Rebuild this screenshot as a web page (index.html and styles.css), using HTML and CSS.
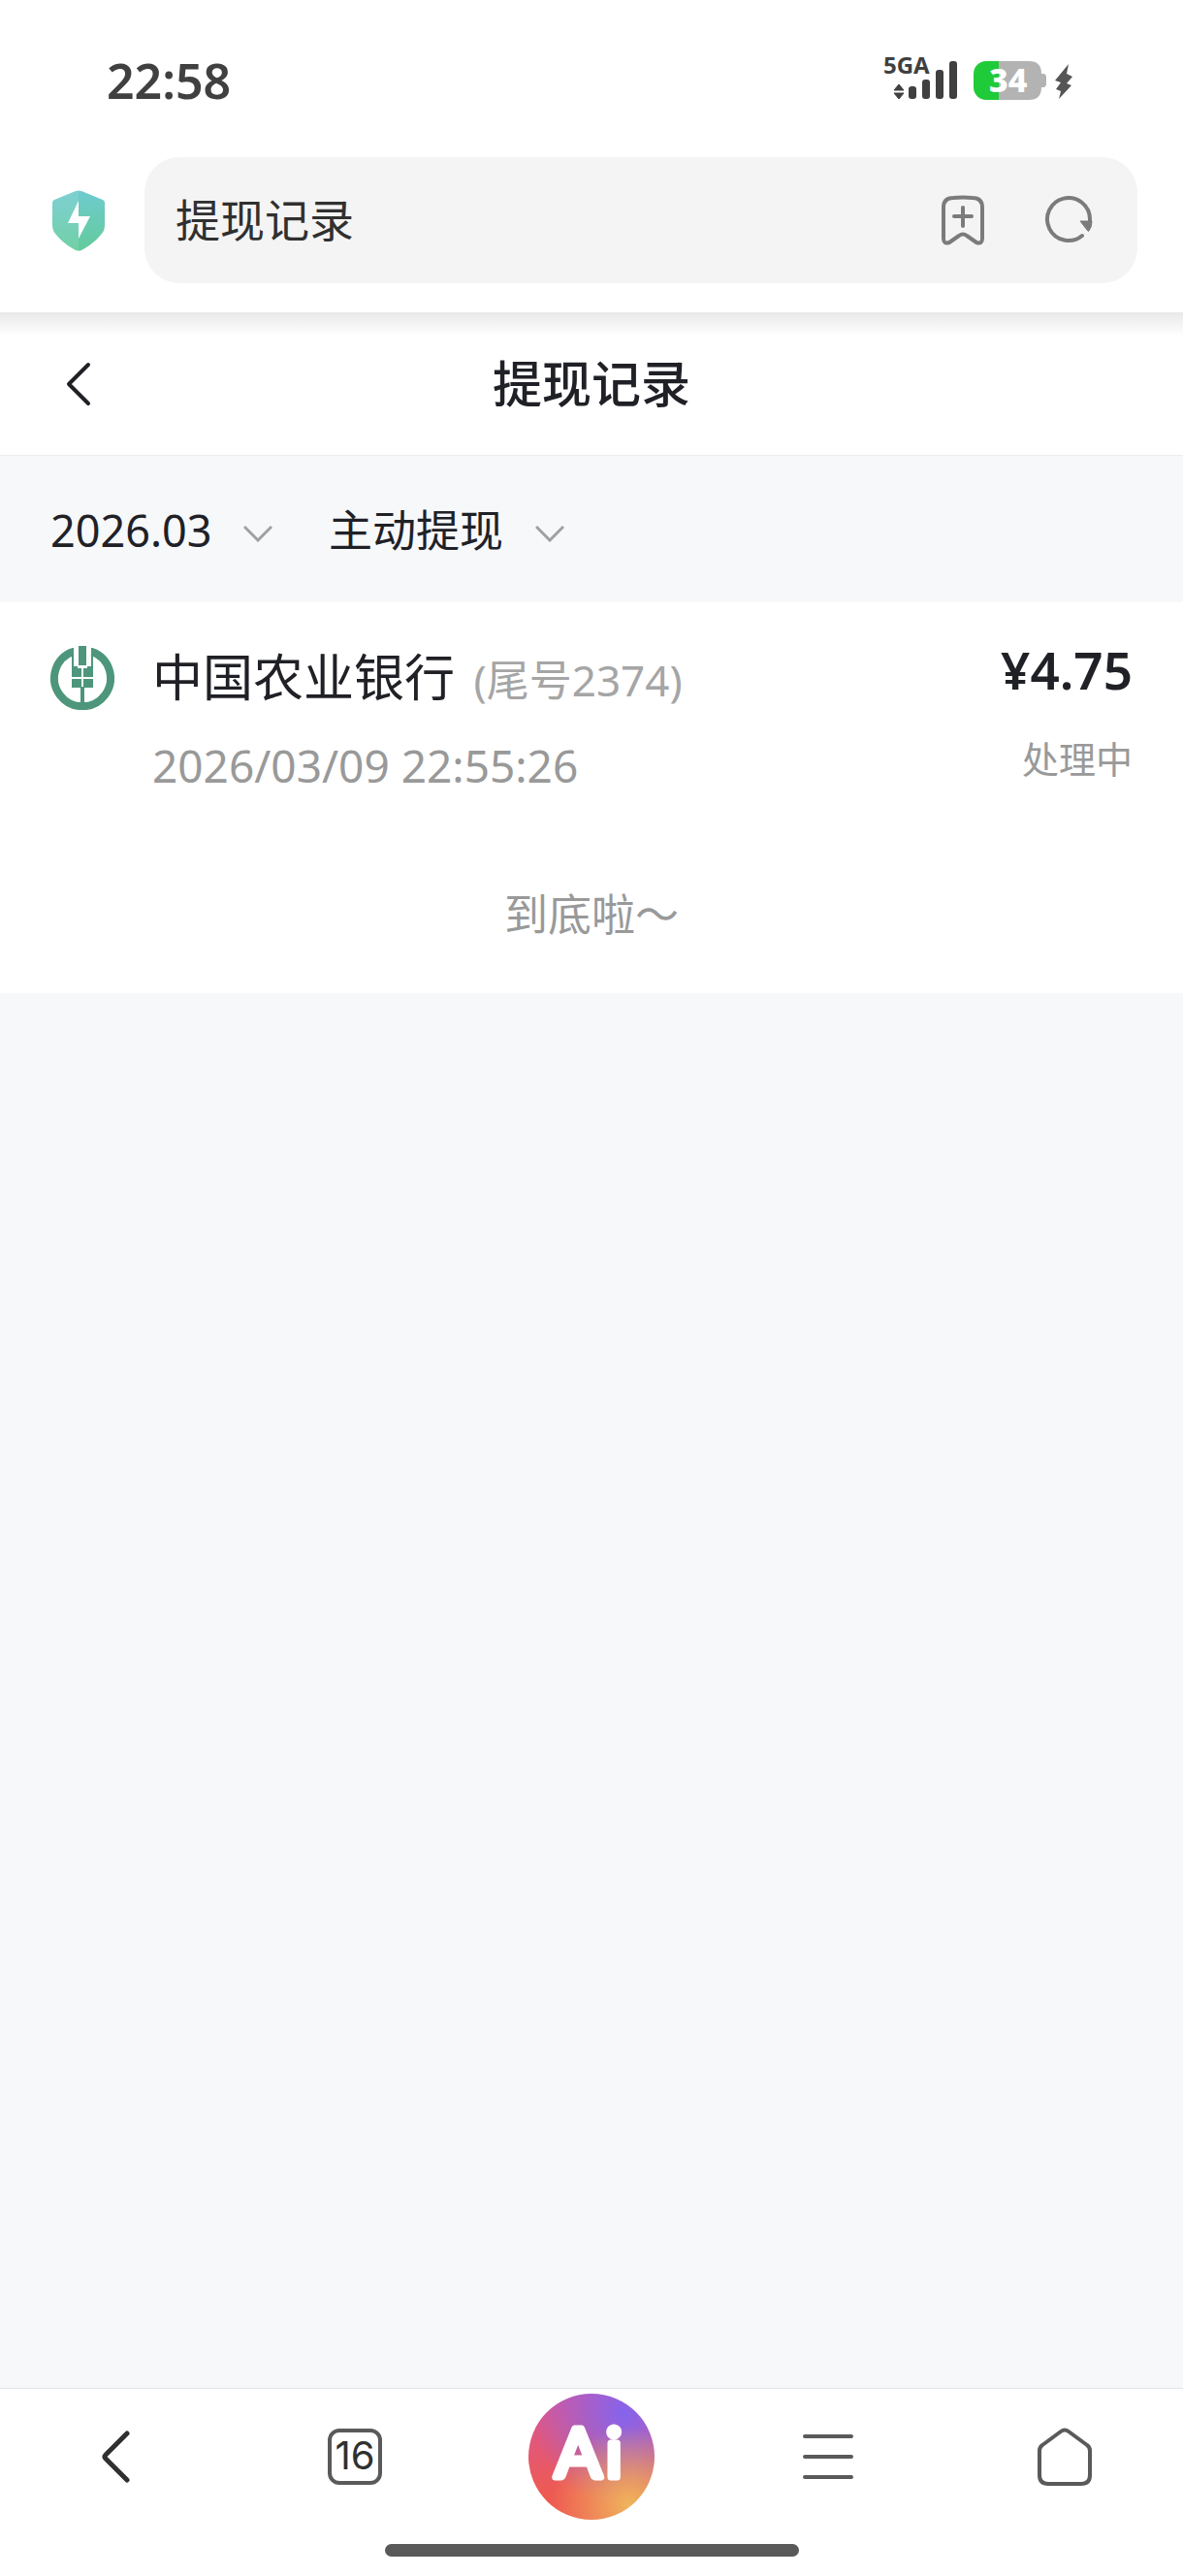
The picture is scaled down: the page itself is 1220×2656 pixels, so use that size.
FILE: index.html
```html
<!DOCTYPE html>
<html lang="zh-CN">
<head>
    <meta charset="UTF-8">
    <meta name="viewport" content="width=device-width, initial-scale=1.0">
    <title>提现记录</title>
    <link rel="stylesheet" href="styles.css">
</head>
<body>
    <header class="browser">
        <div class="status-bar">
            <time class="clock">22:58</time>
            <div class="status-icons">
                <svg class="signal" width="78" height="54" viewBox="0 -6 78 54">
                    <text x="0" y="21">5GA</text>
                    <path d="M11 38 L16 32 L21 38 Z M11 41 L16 47 L21 41 Z" stroke="#404040" stroke-linejoin="round"/>
                    <rect x="26" y="34" width="8" height="13" rx="3"/>
                    <rect x="40" y="27" width="8" height="20" rx="3"/>
                    <rect x="54" y="17" width="8" height="30" rx="3"/>
                    <rect x="68" y="8" width="8" height="39" rx="3"/>
                </svg>
                <svg class="battery" width="76" height="48" viewBox="0 -8 76 48">
                    <rect class="battery-level" x="0" y="0" width="50" height="40" rx="13"/>
                    <path class="battery-rest" d="M26 0 H57 Q70 0 70 13 H72 Q75 13 75 17 V23 Q75 27 72 27 H70 Q70 40 57 40 H26 Z"/>
                    <text x="16" y="32">34</text>
                </svg>
                <svg class="bolt" width="18" height="38" viewBox="0 0 18 38">
                    <path d="M14 1 L0 18 L6 20 L1 27 L6 29 L4 37 L17 23 L12 21 L18 14 L12 11 Z"/>
                </svg>
            </div>
        </div>
        <form class="address-row">
            <svg class="shield" width="54" height="63" viewBox="0 0 54 63">
                <defs>
                    <linearGradient id="shieldFill" x1="0" y1="0" x2="0" y2="1">
                        <stop offset="0" stop-color="#6fcbcf"/>
                        <stop offset="1" stop-color="#62cb9b"/>
                    </linearGradient>
                </defs>
                <path fill="url(#shieldFill)" d="M24 1 Q27 0 30 1 L52 10 Q54 11 54 13 V36 Q54 42 50 46 Q43 55 30 62 Q27 63 24 62 Q11 55 4 46 Q0 42 0 36 V13 Q0 11 2 10 Z"/>
                <path fill="#fff" opacity="0.1" d="M27 0 Q24 0 22 2 L2 10 Q0 11 0 13 V36 Q0 42 4 46 Q11 55 24 62 Q27 63 27 63 Z"/>
                <path fill="#fff" d="M27 11 L16 34 H27 V50 L39 27 H27 Z"/>
            </svg>
            <div class="address-box">
                <input class="address" type="text" value="提现记录" aria-label="搜索或输入网址">
                <button class="icon-button" type="button" aria-label="添加书签">
                    <svg width="46" height="52" viewBox="0 0 46 52" fill="none" stroke="#7b7b7b" stroke-width="4" stroke-linecap="round" stroke-linejoin="round">
                        <path d="M3 45 V13 Q3 3 13 3 Q23 2 33 3 Q43 3 43 13 V45 Q43 51 37 49 L27 42 Q23 39 19 42 L9 49 Q3 51 3 45 Z"/>
                        <path d="M23 13 V32 M14 22 H32"/>
                    </svg>
                </button>
                <button class="icon-button" type="button" aria-label="刷新">
                    <svg width="50" height="50" viewBox="0 0 50 50">
                        <path fill="none" stroke="#7b7b7b" stroke-width="4" stroke-linecap="round" d="M39 41 A22 22 0 1 1 47 24 V28"/>
                        <path fill="#7b7b7b" stroke="#7b7b7b" stroke-linejoin="round" d="M37 26 H49 Q49 32 46 36 Q45 37 44 35 Z"/>
                    </svg>
                </button>
            </div>
        </form>
    </header>

    <main class="page">
        <div class="title-bar">
            <button class="back" type="button" aria-label="返回">
                <svg width="26" height="46" viewBox="0 0 26 46" fill="none" stroke="#202126" stroke-width="4" stroke-linecap="round" stroke-linejoin="round">
                    <path d="M23 3 L3 23 L23 43"/>
                </svg>
            </button>
            <h1>提现记录</h1>
        </div>

        <div class="filters">
            <label class="filter">
                <select aria-label="月份">
                    <option>2026.03</option>
                </select>
                <svg width="30" height="18" viewBox="0 0 30 18"><path d="M1 2 L15 16 L29 2"/></svg>
            </label>
            <label class="filter">
                <select aria-label="提现类型">
                    <option>主动提现</option>
                </select>
                <svg width="30" height="18" viewBox="0 0 30 18"><path d="M1 2 L15 16 L29 2"/></svg>
            </label>
        </div>

        <section class="records">
            <article class="record">
                <svg class="bank-logo" width="66" height="66" viewBox="0 0 66 66">
                    <path fill="none" stroke="#4d967c" stroke-width="8" d="M23 6 A29 29 0 1 0 43 6"/>
                    <g fill="#4d967c">
                        <path d="M22 2 L24 2 V21 H28 V23 H32 V32 H22 Z"/>
                        <path d="M44 2 L42 2 V21 H38 V23 H34 V32 H44 Z"/>
                        <rect x="29" y="0" width="8" height="20"/>
                        <rect x="22" y="34" width="10" height="9"/>
                        <rect x="34" y="34" width="10" height="9"/>
                        <path d="M31 43 V42 H35 V43 V62 H31 Z"/>
                    </g>
                </svg>
                <div class="record-info">
                    <p class="bank">中国农业银行 <span class="tail">(尾号2374)</span></p>
                    <p class="date">2026/03/09 22:55:26</p>
                </div>
                <div class="record-sum">
                    <p class="amount">¥4.75</p>
                    <p class="state">处理中</p>
                </div>
            </article>
            <p class="end">到底啦～</p>
        </section>
    </main>

    <nav class="toolbar">
        <div class="toolbar-buttons">
            <button type="button" aria-label="后退">
                <svg width="34" height="54" viewBox="0 0 34 54" fill="none" stroke="#303030" stroke-width="5" stroke-linecap="round" stroke-linejoin="round">
                    <path d="M26 3 L4 25 Q2 27 4 29 L26 51"/>
                </svg>
            </button>
            <button type="button" aria-label="标签页"><span class="tabs">16</span></button>
            <button type="button" aria-label="AI 助手">
                <span class="ai">
                    <svg width="130" height="130" viewBox="0 0 130 130">
                        <text x="62" y="86" text-anchor="middle">A<tspan dx="5">i</tspan></text>
                    </svg>
                </span>
            </button>
            <button type="button" aria-label="菜单">
                <svg width="52" height="50" viewBox="0 0 52 50" stroke="#5a5a5a" stroke-width="4" stroke-linecap="round">
                    <path d="M2 4 H50 M2 25 H50 M2 46 H50"/>
                </svg>
            </button>
            <button type="button" aria-label="主页">
                <svg width="56" height="60" viewBox="0 0 56 60" fill="none" stroke="#5a5a5a" stroke-width="4" stroke-linejoin="round">
                    <path d="M24 4 Q28 1 32 4 L51 18 Q54 20 54 24 V49 Q54 58 45 58 H11 Q2 58 2 49 V24 Q2 20 5 18 Z"/>
                </svg>
            </button>
        </div>
        <div class="home-indicator"></div>
    </nav>
</body>
</html>
```

FILE: styles.css
```css
* {
    box-sizing: border-box;
}
body {
    margin: 0;
    min-height: 100vh;
    display: flex;
    flex-direction: column;
    background-color: #f7f8fa;
    color: #202126;
    font-family: "Noto Sans", "Noto Sans CJK SC", sans-serif;
}
h1, p {
    margin: 0;
}
button, input, select {
    border: none;
    background: none;
    padding: 0;
    margin: 0;
    font-family: inherit;
    color: inherit;
}
svg {
    display: block;
    flex-shrink: 0;
}

/* browser chrome */
.browser {
    background: white;
    padding-bottom: 30px;
}
.status-bar {
    display: flex;
    justify-content: space-between;
    align-items: center;
    height: 162px;
    padding: 4px 114px 0 110px;
}
.clock {
    font-size: 50px;
    font-weight: 600;
    color: #404040;
}
.status-icons {
    display: flex;
    align-items: flex-end;
    padding-bottom: 15px;
}
.signal {
    fill: #404040;
    font-size: 24px;
    font-weight: 700;
    overflow: visible;
}
.battery {
    margin: 0 8px 0 15px;
    font-size: 34px;
    font-weight: 800;
    fill: white;
}
.battery-level {
    fill: #20cb3a;
}
.battery-rest {
    fill: #b3b3b3;
}
.bolt {
    fill: #555;
}
.address-row {
    display: flex;
    align-items: center;
    gap: 41px;
    padding: 0 47px 0 54px;
}
.address-box {
    flex: 1;
    display: flex;
    align-items: center;
    gap: 61px;
    height: 130px;
    padding: 0 46px 0 32px;
    border-radius: 36px;
    background-color: #f4f4f4;
}
.address {
    flex: 1;
    min-width: 0;
    padding-bottom: 6px;
    font-size: 46px;
    color: #303030;
    outline: none;
}

/* page */
.page {
    flex: 1;
}
.title-bar {
    display: grid;
    grid-template-columns: 1fr auto 1fr;
    align-items: center;
    height: 148px;
    padding: 0 68px;
    border-bottom: 1px solid #eee;
    background: linear-gradient(#e8e8e8, white 24px);
}
.back {
    justify-self: start;
}
.title-bar h1 {
    padding-bottom: 6px;
    font-size: 51px;
    font-weight: 500;
}
.filters {
    display: flex;
    align-items: center;
    gap: 58px;
    height: 151px;
    padding: 8px 52px 0;
}
.filter {
    display: grid;
    align-items: center;
}
.filter select,
.filter svg {
    grid-area: 1 / 1;
}
.filter select {
    appearance: none;
    padding: 0 62px 6px 0;
    font-size: 45px;
}
.filter svg {
    justify-self: end;
    pointer-events: none;
    fill: none;
    stroke: #a0a0a0;
    stroke-width: 3;
}
.records {
    background: white;
    padding: 39px 52px 45px;
}
.record {
    display: flex;
    align-items: flex-start;
}
.bank-logo {
    margin: 6px 39px 0 0;
}
.record-info {
    flex: 1;
}
.bank {
    font-size: 52px;
    line-height: 76px;
}
.tail {
    margin-left: 6px;
    font-size: 44px;
    color: #a5a5a5;
}
.date {
    margin-top: 14px;
    font-size: 46px;
    line-height: 72px;
    color: #999;
}
.record-sum {
    text-align: right;
}
.amount {
    font-size: 53px;
    font-weight: 600;
    line-height: 62px;
}
.state {
    margin-top: 30px;
    font-size: 38px;
    line-height: 60px;
    color: #999;
}
.end {
    margin-top: 82px;
    font-size: 45px;
    line-height: 72px;
    text-align: center;
    color: #999;
}

/* bottom toolbar */
.toolbar {
    background: white;
    border-top: 1px solid #e4e4e6;
    padding: 5px 0 20px;
}
.toolbar-buttons {
    display: grid;
    grid-template-columns: repeat(5, 1fr);
    height: 130px;
}
.toolbar-buttons button {
    display: flex;
    align-items: center;
    justify-content: center;
}
.tabs {
    width: 56px;
    height: 58px;
    border: 4px solid #5a5a5a;
    border-radius: 12px;
    font-family: Inter, sans-serif;
    font-size: 40px;
    line-height: 48px;
    color: #303030;
}
.ai {
    border-radius: 50%;
    background: radial-gradient(circle at 80% 88%, #f0b45c, rgba(240, 170, 90, 0) 52%),
        radial-gradient(circle at 76% 16%, #8464ee, rgba(132, 100, 238, 0) 65%),
        linear-gradient(#d8569c, #ee5a52 80%);
}
.ai text {
    fill: white;
    stroke: white;
    stroke-width: 7px;
    stroke-linejoin: round;
    font-family: Lato, sans-serif;
    font-size: 70px;
    font-weight: 400;
}
.home-indicator {
    width: 35%;
    height: 13px;
    margin: 25px auto 0;
    border-radius: 7px;
    background-color: #595959;
}
```
